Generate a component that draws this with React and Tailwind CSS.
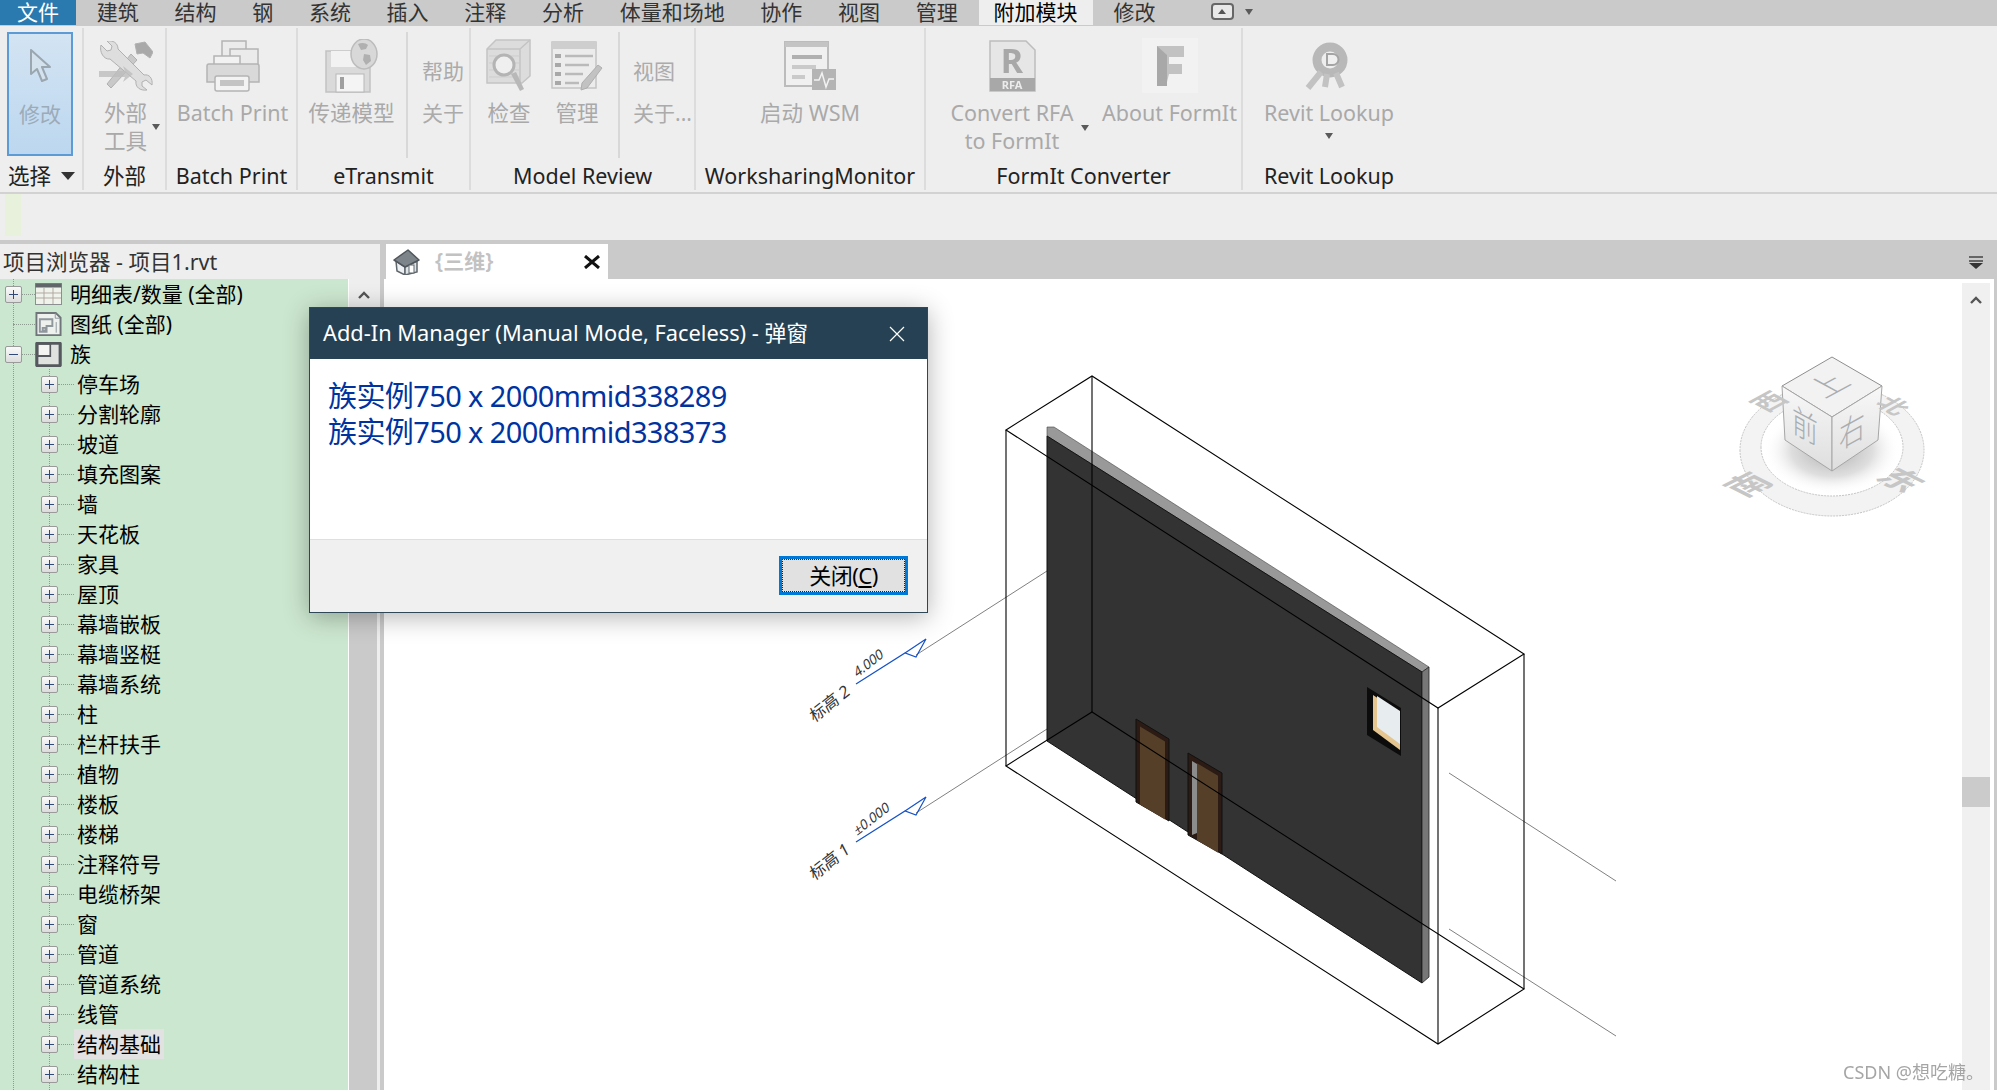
import { Fragment } from 'react';

const TABS = ['建筑', '结构', '钢', '系统', '插入', '注释', '分析', '体量和场地', '协作', '视图', '管理'];

const FAMILIES = [
  '停车场', '分割轮廓', '坡道', '填充图案', '墙', '天花板', '家具', '屋顶', '幕墙嵌板', '幕墙竖梃', '幕墙系统', '柱',
  '栏杆扶手', '植物', '楼板', '楼梯', '注释符号', '电缆桥架', '窗', '管道', '管道系统', '线管', '结构基础', '结构柱',
];

/* ── Ribbon icons (all greyed out, the ribbon is disabled) ── */
function CursorIcon() {
  return (
    <svg width="24" height="36" viewBox="0 0 24 36" className="mt-[15px] ml-[-1px]">
      <path d="M3 1v24l6-5 5 12 5-2-5-12h8z" fill="#d4e2ee" stroke="#9aa6b0" strokeWidth="2" strokeLinejoin="round" />
    </svg>
  );
}

function ToolsIcon() {
  return (
    <svg width="54" height="50" viewBox="0 0 54 50" className="blur-[0.4px]">
      <g stroke="#b0b0b0" strokeLinejoin="round">
        <path d="M36 3l10-2 8 10-3 6-7-5-6 1z" fill="#a9a9a9" />
        <path d="M32 13L8 43l4 4 26-28z" fill="#c9c9c9" />
        <path d="M2 4l6 6 4-1 1-4-5-5c6-1 11 2 11 8l26 26c5-1 9 3 8 10l-6-5-4 2v4l5 4c-7 1-12-3-11-9L11 18C5 19 0 11 2 4z" fill="#dedede" />
        <path d="M0 36h26l-2 5 10-8-10-8 2 5H0z" fill="#bdbdbd" stroke="none" opacity="0.8" />
      </g>
    </svg>
  );
}

function PrinterIcon() {
  return (
    <svg width="54" height="52" viewBox="0 0 54 52" className="blur-[0.4px]">
      <g stroke="#b4b4b4" strokeWidth="1.5" fill="#ebebeb">
        <rect x="16" y="1" width="24" height="28" />
        <rect x="24" y="9" width="28" height="30" />
        <rect x="8" y="16" width="26" height="16" fill="#f2f2f2" />
        <path d="M3 24h48a2 2 0 012 2v16H1V26a2 2 0 012-2z" fill="#d9d9d9" />
        <rect x="9" y="36" width="34" height="15" rx="2" fill="#f3f3f3" />
        <rect x="14" y="40" width="24" height="6" fill="#c4c4c4" stroke="none" />
      </g>
    </svg>
  );
}

function SaveGlobeIcon() {
  return (
    <svg width="54" height="54" viewBox="0 0 54 54" className="blur-[0.4px]">
      <path d="M1 12h44v41H1z" fill="#dadada" stroke="#c2c2c2" strokeWidth="1.5" />
      <rect x="6" y="12" width="32" height="16" fill="#f2f2f2" />
      <rect x="11" y="35" width="28" height="18" fill="#f4f4f4" stroke="#b8b8b8" />
      <rect x="15" y="38" width="4" height="12" fill="#9f9f9f" />
      <ellipse cx="39" cy="15" rx="13" ry="15" fill="#d8d8d8" stroke="#bcbcbc" strokeWidth="1.5" />
      <path d="M33 5c4-2 8-1 10 1l-2 4-5 1zM39 15l6 1 1 6-5 4-3-5z" fill="#b0b0b0" />
    </svg>
  );
}

function InspectIcon() {
  return (
    <svg width="46" height="54" viewBox="0 0 46 54" className="blur-[0.4px]">
      <path d="M10 1h34v36L36 44H1V10z" fill="#dcdcdc" stroke="#c4c4c4" strokeWidth="1.5" />
      <path d="M1 10h33v34M34 10l10-9" fill="none" stroke="#c4c4c4" strokeWidth="1.5" />
      <g stroke="#cdcdcd"><path d="M3 17h30M3 24h30M3 31h30M3 38h30" /></g>
      <circle cx="18" cy="26" r="10" fill="#efefef" stroke="#b4b4b4" strokeWidth="3" />
      <path d="M25 35l9 17 4-2-8-17z" fill="#b8b8b8" />
    </svg>
  );
}

function ManageIcon() {
  return (
    <svg width="52" height="50" viewBox="0 0 52 50" className="blur-[0.4px]">
      <rect x="1" y="1" width="44" height="46" fill="#ececec" stroke="#c4c4c4" strokeWidth="1.5" />
      <rect x="1" y="1" width="44" height="7" fill="#cecece" />
      <g stroke="#bababa" strokeWidth="2.5">
        <path d="M14 15h28M14 24h24M14 33h18M14 42h14" />
        <path d="M4 15h6M4 24h6M4 33h6M4 42h6" stroke="#a8a8a8" strokeWidth="4" />
      </g>
      <path d="M47 24l4 3-15 20-6 2 1-7z" fill="#c2c2c2" stroke="#aeaeae" />
    </svg>
  );
}

function WsmIcon() {
  return (
    <svg width="52" height="50" viewBox="0 0 52 50" className="blur-[0.4px]">
      <rect x="1" y="1" width="43" height="44" fill="#f0f0f0" stroke="#bcbcbc" strokeWidth="2" />
      <rect x="1" y="1" width="43" height="5" fill="#c4c4c4" />
      <rect x="8" y="14" width="30" height="4" fill="#b0b0b0" />
      <rect x="8" y="24" width="24" height="4" fill="#cacaca" />
      <rect x="8" y="34" width="13" height="4" fill="#cacaca" />
      <rect x="28" y="28" width="24" height="21" fill="#b4b4b4" />
      <path d="M30 39h5l3-7 4 14 3-8h5" fill="none" stroke="#f2f2f2" strokeWidth="1.5" />
    </svg>
  );
}

function RfaIcon() {
  return (
    <svg width="47" height="52" viewBox="0 0 47 52" className="blur-[0.4px]">
      <path d="M1 1h36l9 9v41H1z" fill="#e6e6e6" stroke="#bdbdbd" strokeWidth="1.5" />
      <rect x="1" y="38" width="45" height="13" fill="#a8a8a8" />
      <text x="23" y="49" textAnchor="middle" fontSize="11" fontWeight="700" fill="#ececec">RFA</text>
      <text x="23" y="33" textAnchor="middle" fontSize="34" fontWeight="700" fill="#a8a8a8">R</text>
    </svg>
  );
}

function FormItIcon() {
  return (
    <svg width="56" height="55" viewBox="0 0 56 55" className="blur-[0.4px]">
      <rect width="56" height="55" fill="#f2f2f2" />
      <path d="M15 8h27v11H27v7h13v10H27l-3 12h-9z" fill="#c2c2c2" />
      <path d="M15 8l10 9v31h-10z" fill="#a8a8a8" />
    </svg>
  );
}

function LookupIcon() {
  return (
    <svg width="48" height="48" viewBox="0 0 48 48" className="blur-[0.4px]">
      <circle cx="25" cy="18" r="13" fill="none" stroke="#b8b8b8" strokeWidth="9" />
      <path d="M16 30L3 46M22 32l-2 13M31 31l6 14" stroke="#c2c2c2" strokeWidth="6" />
      <path d="M22 12h6a5 5 0 010 11h-6z" fill="#efefef" stroke="#a4a4a4" strokeWidth="2" />
    </svg>
  );
}

function Caret({ className = '' }) {
  return <span className={`w-0 h-0 border-x-[4px] border-x-transparent border-t-[6px] border-t-[#5a5a5a] ${className}`} />;
}

function BigButton({ width, icon, lines }) {
  return (
    <div className="flex flex-col items-center shrink-0" style={{ width }}>
      <div className="mt-[10px] h-[55px] flex items-center justify-center">{icon}</div>
      <div className="mt-[6px] text-center text-[21.5px] leading-[28px] text-[#a9a9a9] whitespace-nowrap">
        {lines.map(l => <div key={l}>{l}</div>)}
      </div>
    </div>
  );
}

function SmallColumn({ first, second, className = '' }) {
  return (
    <div className={`flex flex-col pt-[29px] gap-[14px] text-[21px] leading-[28px] text-[#ababab] whitespace-nowrap ${className}`}>
      <div>{first}</div>
      <div>{second}</div>
    </div>
  );
}

function PanelSep({ className = '' }) {
  return <div className={`w-[2px] h-[126px] mt-[4px] bg-[#d8d8d8] shrink-0 ${className}`} />;
}

function Panel({ width, label, children, last }) {
  return (
    <div className={`flex flex-col shrink-0 ${last ? '' : 'border-r-2 border-[#dcdcdc]'}`} style={{ width }}>
      <div className="flex h-[130px]">{children}</div>
      <div className="h-[32px] pt-[4px] text-center text-[21.5px] leading-[28px] text-[#222] whitespace-nowrap">{label}</div>
    </div>
  );
}

function Ribbon() {
  return (
    <div className="flex h-[166px] py-[2px] bg-[#eeeeee]">
      <div className="flex flex-col w-[84px] shrink-0 border-r-2 border-[#dcdcdc]">
        <div className="h-[130px] pl-[7px] pt-[4px]">
          <div className="w-[66px] h-[124px] flex flex-col items-center border-2 border-[#5c9bd6] bg-gradient-to-b from-[#d3e4f3] to-[#bcd7ef]">
            <CursorIcon />
            <div className="mt-[15px] text-[21px] leading-[28px] text-[#9cabb8]">修改</div>
          </div>
        </div>
        <div className="h-[32px] pt-[4px] pl-[8px] flex items-start gap-[10px] text-[21.5px] leading-[28px] text-[#222]">
          选择<Caret className="mt-[10px] border-x-[7px] border-t-[8px] border-t-[#333]" />
        </div>
      </div>

      <Panel width={83} label="外部">
        <div className="relative">
          <BigButton width={83} icon={<ToolsIcon />} lines={['外部', '工具']} />
          <Caret className="absolute left-[68px] top-[96px]" />
        </div>
      </Panel>

      <Panel width={131} label="Batch Print">
        <BigButton width={131} icon={<PrinterIcon />} lines={['Batch Print']} />
      </Panel>

      <Panel width={173} label="eTransmit">
        <BigButton width={107} icon={<SaveGlobeIcon />} lines={['传递模型']} />
        <PanelSep className="ml-[1px]" />
        <SmallColumn first="帮助" second="关于" className="ml-[14px]" />
      </Panel>

      <Panel width={225} label="Model Review">
        <BigButton width={76} icon={<InspectIcon />} lines={['检查']} />
        <BigButton width={60} icon={<ManageIcon />} lines={['管理']} />
        <PanelSep className="ml-[11px]" />
        <SmallColumn first="视图" second="关于..." className="ml-[13px]" />
      </Panel>

      <Panel width={230} label="WorksharingMonitor">
        <BigButton width={228} icon={<WsmIcon />} lines={['启动 WSM']} />
      </Panel>

      <Panel width={317} label="FormIt Converter">
        <div className="relative">
          <BigButton width={172} icon={<RfaIcon />} lines={['Convert RFA', 'to FormIt']} />
          <Caret className="absolute left-[155px] top-[97px]" />
        </div>
        <BigButton width={143} icon={<FormItIcon />} lines={['About FormIt']} />
      </Panel>

      <Panel width={172} label="Revit Lookup" last>
        <div className="relative">
          <BigButton width={172} icon={<LookupIcon />} lines={['Revit Lookup']} />
          <Caret className="absolute left-[82px] top-[105px]" />
        </div>
      </Panel>
    </div>
  );
}

/* ── Project browser ── */
function Expander({ open }) {
  return (
    <span className="relative w-[17px] h-[17px] shrink-0 rounded-[2px] border border-[#9a9a9a] bg-gradient-to-b from-[#fafafa] to-[#dcdcdc]">
      <span className="absolute left-[3px] right-[3px] top-[7px] h-[1px] bg-[#2f4a7a]" />
      {!open && <span className="absolute top-[3px] bottom-[3px] left-[7px] w-[1px] bg-[#2f4a7a]" />}
    </span>
  );
}

function Dots({ width }) {
  return <span className="h-0 shrink-0 border-t border-dotted border-[#8d9c90]" style={{ width }} />;
}

function ScheduleIcon() {
  return (
    <svg width="27" height="22" viewBox="0 0 27 22">
      <rect x="0.5" y="0.5" width="26" height="21" fill="#f0f2ec" stroke="#8b8f92" />
      <rect x="0.5" y="0.5" width="26" height="4" fill="#62666b" />
      <path d="M1 10h25M1 15h25M9 5v16M18 5v16" stroke="#b3a9a3" />
    </svg>
  );
}

function SheetIcon() {
  return (
    <svg width="28" height="26" viewBox="0 0 28 26">
      <path d="M1.5 1.5h20l5 5v18h-25z" fill="#eef1ee" stroke="#6f7579" strokeWidth="2" />
      <path d="M5 21V8h13v7h-6v6zM8 17h3v3H8z" fill="none" stroke="#8f979c" strokeWidth="2" />
      <path d="M21 2v5h5M22 11v11" fill="none" stroke="#8f979c" />
    </svg>
  );
}

function FamilyIcon() {
  return (
    <svg width="28" height="27" viewBox="0 0 28 27">
      <path d="M2 2h24v23H2z" fill="#f4f5f2" stroke="#55595d" strokeWidth="3" strokeLinejoin="round" />
      <path d="M15 2h2v14H3v-2h12z" fill="#55595d" />
      <path d="M17 2h9v23H2v-9h15z" fill="#dfe2df" />
      <path d="M2 2h24v23H2z" fill="none" stroke="#55595d" strokeWidth="3" strokeLinejoin="round" />
    </svg>
  );
}

function TopRow({ open, hasBox, icon, label }) {
  return (
    <div className="flex items-center h-[30px] pl-[5px]">
      {hasBox ? <Expander open={open} /> : <span className="w-[8px] shrink-0" />}
      <Dots width={hasBox ? 13 : 22} />
      <span className="w-[27px] flex justify-center shrink-0">{icon}</span>
      <span className="ml-[8px] text-[21px] leading-[30px] text-black whitespace-nowrap">{label}</span>
    </div>
  );
}

function ChevronUp() {
  return (
    <svg width="12" height="8" viewBox="0 0 12 8">
      <path d="M1 7l5-5 5 5" fill="none" stroke="#555" strokeWidth="2.4" />
    </svg>
  );
}

function ProjectBrowser() {
  return (
    <div className="w-[380px] shrink-0 flex flex-col">
      <div className="h-[35px] pl-[3px] bg-[#eeeeee] text-[21.5px] leading-[35px] text-[#333] whitespace-nowrap">
        项目浏览器 - 项目1.rvt
      </div>
      <div className="flex flex-1 min-h-0">
        <div className="relative w-[348px] bg-[#cce7cf] overflow-hidden">
          <div className="absolute inset-y-0 left-[13px] border-l border-dotted border-[#8d9c90]" />
          <div className="absolute top-[90px] bottom-0 left-[49px] border-l border-dotted border-[#8d9c90]" />
          <div className="relative">
            <TopRow hasBox icon={<ScheduleIcon />} label="明细表/数量 (全部)" />
            <TopRow icon={<SheetIcon />} label="图纸 (全部)" />
            <TopRow hasBox open icon={<FamilyIcon />} label="族" />
            {FAMILIES.map(name => (
              <div key={name} className="flex items-center h-[30px] pl-[41px]">
                <Expander />
                <Dots width={16} />
                <span className={`px-[3px] text-[21px] leading-[30px] text-black whitespace-nowrap ${name === '结构基础' ? 'bg-[#e2e2e2]' : ''}`}>
                  {name}
                </span>
              </div>
            ))}
          </div>
        </div>
        <div className="w-[1px] bg-white" />
        <div className="w-[31px] flex flex-col bg-[#eeeeee]">
          <div className="h-[32px] pr-[2px] flex items-center justify-center"><ChevronUp /></div>
          <div className="flex-1 w-[28px] mt-[160px] bg-[#cacaca]" />
        </div>
      </div>
    </div>
  );
}

/* ── 3D view ── */
function ViewCube() {
  return (
    <g>
      <defs>
        <radialGradient id="cubeShadow">
          <stop offset="0%" stopColor="#a8a8a8" />
          <stop offset="60%" stopColor="#d0d0d0" stopOpacity="0.7" />
          <stop offset="100%" stopColor="#ffffff" stopOpacity="0" />
        </radialGradient>
        <linearGradient id="cubeFront" x1="0" y1="0" x2="0" y2="1">
          <stop offset="0%" stopColor="#f8f8f8" />
          <stop offset="100%" stopColor="#dedede" />
        </linearGradient>
      </defs>
      <path
        d="M1740 450a92 66 0 10184 0a92 66 0 10-184 0zM1761 447a71 49 0 00142 0a71 49 0 00-142 0z"
        fillRule="evenodd" fill="#f3f3f3" stroke="#c4c4c4" strokeDasharray="2 1"
      />
      <ellipse cx="1832" cy="450" rx="68" ry="44" fill="url(#cubeShadow)" />
      <path d="M1832 357l50 29-50 31-50-31z" fill="#f2f2f2" stroke="#8e8e8e" />
      <path d="M1782 386l50 31v54l-47-31z" fill="url(#cubeFront)" stroke="#a6a6a6" />
      <path d="M1882 386l-50 31v54l46-31z" fill="url(#cubeFront)" stroke="#a6a6a6" />
      <g fill="#a9adb1" fontWeight="300">
        <text transform="matrix(1.1 -0.6 1.1 0.6 1824 399)" fontSize="26">上</text>
        <text transform="matrix(1 0.55 0 1.3 1792 431)" fontSize="26">前</text>
        <text transform="matrix(1 -0.55 0 1.3 1839 450)" fontSize="26">右</text>
      </g>
      <g fill="#c6c6c6" fontWeight="700">
        <text transform="matrix(1 -0.55 1 0.55 1766 413)" fontSize="24">西</text>
        <text transform="matrix(1 0.55 -1 0.55 1874 404)" fontSize="22">北</text>
        <text transform="matrix(1.2 -0.6 1.2 0.6 1744 498)" fontSize="26">南</text>
        <text transform="matrix(1.2 0.6 -1.2 0.6 1874 478)" fontSize="26">东</text>
      </g>
    </g>
  );
}

function Door({ x1, x2, top1, top2, bot1, bot2, open }) {
  const o = `${x1},${top1} ${x2},${top2} ${x2},${bot2} ${x1},${bot1}`;
  const px1 = open ? x1 + 9 : x1 + 4;
  const px2 = x2 - 4;
  const slope = (top2 - top1) / (x2 - x1);
  const inner = `${px1},${top1 + 5 + (px1 - x1) * slope} ${px2},${top1 + 5 + (px2 - x1) * slope} ${px2},${bot1 + (px2 - x1) * slope} ${px1},${bot1 + (px1 - x1) * slope}`;
  return (
    <Fragment>
      <polygon points={o} fill="#2b1b14" stroke="#111" />
      <polygon points={inner} fill="#553f28" />
      {open && <polygon points={`${x1 + 4},${top1 + 8} ${x1 + 9},${top1 + 11} ${x1 + 9},${bot1 - 2} ${x1 + 4},${bot1}`} fill="#8c8c8c" />}
    </Fragment>
  );
}

function LevelMark({ y, label, value }) {
  return (
    <Fragment>
      <path d={`M916 ${y}L1047 ${y - 84}`} stroke="#808080" fill="none" />
      <path d={`M856 ${y + 29}L905 ${y - 2}L916 ${y + 2}L926 ${y - 16}L905 ${y - 2}`} stroke="#1552c8" strokeWidth="1.2" fill="none" />
      <text transform={`translate(857 ${y + 23}) rotate(-38) skewX(-14)`} fontSize="13.5" fill="#333">{value}</text>
      <text transform={`translate(814 ${y + 68}) rotate(-38) skewX(-10)`} fontSize="16.5" fill="#333">{label}</text>
    </Fragment>
  );
}

function Model() {
  return (
    <svg width="1578" height="811" viewBox="384 279 1578 811" className="shrink-0 bg-white">
      <LevelMark y={655} label="标高 2" value="4.000" />
      <LevelMark y={813} label="标高 1" value="±0.000" />
      <path d="M1449 773L1616 881M1449 929L1616 1036" stroke="#808080" fill="none" />

      {/* wall */}
      <polygon points="1047,427 1054,427 1429,667 1422,672 1047,436" fill="#999999" stroke="#444" strokeWidth="0.6" />
      <polygon points="1047,436 1422,672 1422,983 1047,741" fill="#333333" stroke="#111" />
      <polygon points="1422,672 1429,667 1429,977 1422,983" fill="#777777" stroke="#222" strokeWidth="0.8" />

      <Door x1={1136} x2={1169} top1={719} top2={739} bot1={802} bot2={821} />
      <Door x1={1188} x2={1222} top1={753} top2={773} bot1={835} bot2={854} open />

      {/* window */}
      <polygon points="1367,687 1401,708 1401,756 1367,735" fill="#0c0c0c" />
      <polygon points="1373,695 1400,713 1400,750 1373,730" fill="#e5c590" />
      <polygon points="1377,696 1400,711 1400,744 1377,727" fill="#e7ecef" />

      {/* crop box */}
      <g fill="none" stroke="#000" strokeWidth="1.1">
        <path d="M1006 430L1092 376L1524 654L1438 708ZM1006 766L1092 712L1524 989L1438 1044Z" />
        <path d="M1006 430V766M1092 376V712M1524 654V989M1438 708V1044" />
      </g>

      <ViewCube />
    </svg>
  );
}

function ViewScrollbar() {
  return (
    <Fragment>
      <div className="w-[28px] mt-[4px] bg-[#f0f0f0] shrink-0">
        <div className="h-[34px] flex items-center justify-center"><ChevronUp /></div>
        <div className="h-[30px] mt-[460px] bg-[#cbcbcb]" />
      </div>
      <div className="w-[4px] bg-white shrink-0" />
      <div className="w-[3px] bg-[#cacaca] shrink-0" />
    </Fragment>
  );
}

function HouseIcon() {
  return (
    <svg width="27" height="26" viewBox="0 0 27 26">
      <path d="M3 12l9 6v8l-8-4z" fill="#eef1f3" stroke="#5f666c" strokeWidth="1.5" />
      <path d="M12 18l12-6v11l-12 3z" fill="#dfe4e8" stroke="#5f666c" strokeWidth="1.5" />
      <path d="M15 1L1 11l11 7 14-7z" fill="#7d858b" stroke="#4f565c" strokeWidth="1.5" strokeLinejoin="round" />
      <rect x="16" y="16" width="5" height="8" fill="#fff" stroke="#5f666c" />
    </svg>
  );
}

function AddInDialog() {
  return (
    <div className="absolute left-[309px] top-[307px] w-[619px] h-[306px] flex flex-col border border-[#2f4858] bg-white shadow-[0_4px_24px_rgba(0,0,0,0.3)]">
      <div className="h-[51px] flex items-center justify-between pl-[13px] pr-[22px] bg-[#254153] text-white text-[21.8px] whitespace-nowrap">
        <span>Add-In Manager (Manual Mode, Faceless) - 弹窗</span>
        <svg width="16" height="16" viewBox="0 0 16 16">
          <path d="M1 1l14 14M15 1L1 15" stroke="#fff" strokeWidth="1.2" />
        </svg>
      </div>
      <div className="h-[180px] pl-[18px] pt-[19px] text-[29px] leading-[36px] text-[#0033a0] tracking-[-0.6px] whitespace-nowrap">
        <div>族实例750 x 2000mmid338289</div>
        <div>族实例750 x 2000mmid338373</div>
      </div>
      <div className="flex-1 flex justify-end pt-[16px] pr-[19px] border-t border-[#dfdfdf] bg-[#f0f0f0]">
        <div className="w-[129px] h-[39px] border-[3px] border-[#0078d7] bg-[#e1e1e1] flex">
          <div className="flex-1 flex items-center justify-center border border-dotted border-[#222] text-[22px] text-black tracking-[-0.5px]">
            关闭(<span className="underline">C</span>)
          </div>
        </div>
      </div>
    </div>
  );
}

export default function App() {
  return (
    <div className="relative w-[1997px] h-[1090px] overflow-hidden bg-[#cacaca] font-['Noto_Sans','Noto_Sans_CJK_SC',sans-serif]">
      {/* ── Tabs ── */}
      <div className="flex items-start h-[26px] overflow-hidden bg-[#cacaca] text-[21px] leading-[26px] text-[#333]">
        <div className="w-[76px] h-[26px] -mt-[1px] text-center text-white bg-[#2a7ab0]">文件</div>
        <div className="w-[3px]" />
        {TABS.map(t => <div key={t} className="px-[17.85px] -mt-[1px] whitespace-nowrap">{t}</div>)}
        <div className="mx-[3px] px-[15px] h-[26px] -mt-[1px] text-black bg-[#eeeeee]">附加模块</div>
        <div className="px-[18px] -mt-[1px]">修改</div>
        <div className="ml-[37px] mt-[3px] w-[23px] h-[17px] rounded-[4px] border-2 border-[#666] bg-[#e8e8e8] flex items-center justify-center">
          <span className="w-0 h-0 border-x-[4px] border-x-transparent border-b-[5px] border-b-[#555]" />
        </div>
        <Caret className="ml-[11px] mt-[9px]" />
      </div>

      <Ribbon />
      <div className="h-[2px] bg-[#d2d2d2]" />

      {/* ── Options bar ── */}
      <div className="h-[46px] bg-[#eeeeee]">
        <div className="ml-[5px] w-[16px] h-[42px] bg-[#e8f1db]" />
      </div>

      {/* ── Main area ── */}
      <div className="flex h-[850px] pt-[4px]">
        <ProjectBrowser />
        <div className="w-[4px] shrink-0" />
        <div className="flex-1 min-w-0 flex flex-col">
          <div className="h-[35px] flex items-center justify-between pr-[14px]">
            <div className="ml-[2px] w-[222px] h-[35px] flex items-center bg-white">
              <span className="ml-[7px]"><HouseIcon /></span>
              <span className="ml-[15px] text-[21px] font-semibold text-[#c2c2c2]">{'{三维}'}</span>
              <svg width="18" height="14" viewBox="0 0 18 14" className="ml-[90px]">
                <path d="M2 1l14 12M16 1L2 13" stroke="#111" strokeWidth="3" />
              </svg>
            </div>
            <svg width="14" height="14" viewBox="0 0 14 14">
              <path d="M0 2h14M0 6h14" stroke="#444" strokeWidth="1.4" />
              <path d="M0 8h14l-7 6z" fill="#333" />
            </svg>
          </div>
          <div className="flex flex-1 min-h-0 bg-white">
            <Model />
            <ViewScrollbar />
          </div>
        </div>
      </div>

      <AddInDialog />

      {/* watermark */}
      <div className="absolute right-[13px] top-[1059px] text-[18px] leading-[26px] text-[#8f8f8f] opacity-80 whitespace-nowrap">
        CSDN @想吃糖。
      </div>
    </div>
  );
}
